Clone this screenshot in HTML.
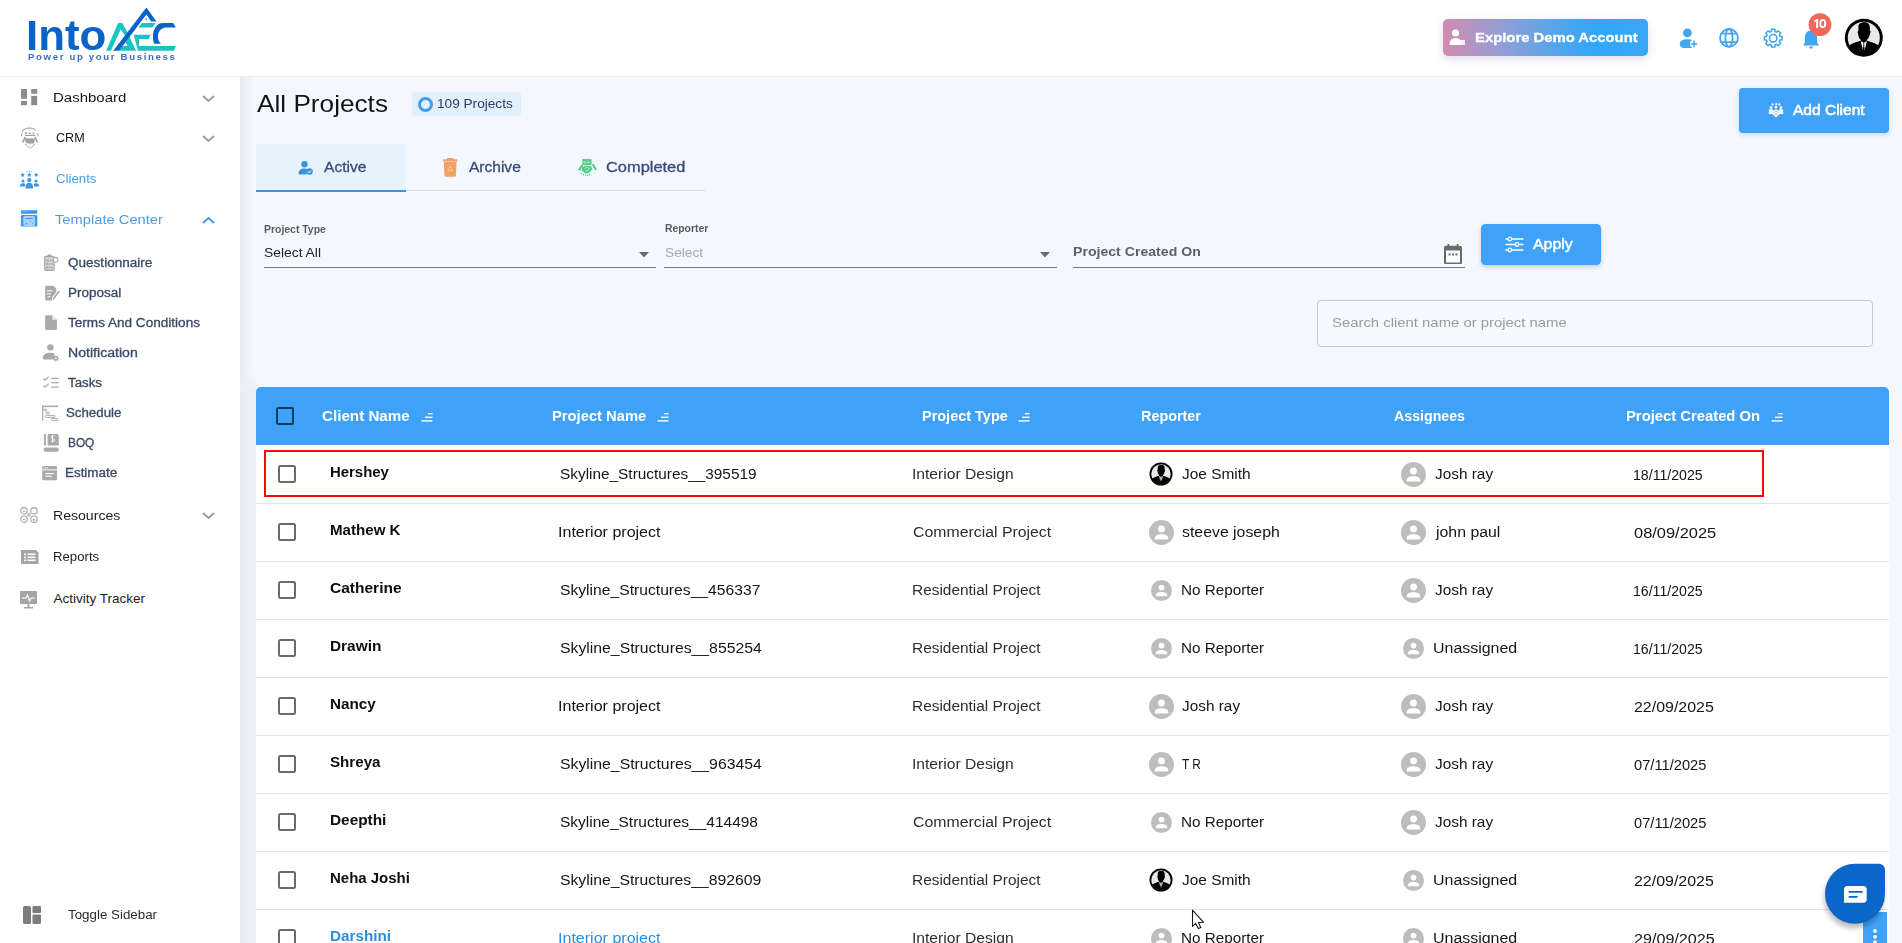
<!DOCTYPE html>
<html><head><meta charset="utf-8">
<style>
*{box-sizing:border-box;margin:0;padding:0}
html,body{width:1902px;height:943px;overflow:hidden;background:#f4f8fe;font-family:"Liberation Sans",sans-serif;color:#111;position:relative}
.abs{position:absolute}
.t{position:absolute;white-space:nowrap;line-height:1;transform-origin:0 0;display:inline-block}
</style></head><body>

<div class="abs" style="left:0;top:0;width:1902px;height:77px;background:#fff;border-bottom:1px solid #e8ebef"></div>
<div class="abs" style="left:0;top:77px;width:240px;height:866px;background:#fff"></div>
<div class="abs" style="left:240px;top:77px;width:14px;height:866px;background:linear-gradient(to right,#e6ebf2,#f4f8fe)"></div>
<div class="abs" style="left:240px;top:392px;width:16px;height:551px;background:linear-gradient(to right,#e6ebf1,#eaeff5 60%,#ebf0f7)"></div>
<div class="abs" style="left:240px;top:372px;width:16px;height:20px;background:linear-gradient(to bottom,rgba(234,239,245,0),#eaeff5)"></div>
<svg class="abs" style="left:104px;top:4px" width="74.2" height="50" viewBox="0 0 1400 943">
<path d="M40,880 L265,360 L345,360 L480,600 L400,600 L315,480 L130,880 Z" fill="#1cc3c4"/>
<path fill-rule="evenodd" d="M285,880 L605,880 L482,620 Z M355,790 L445,790 L405,715 Z" fill="#1cc3c4"/>
<path d="M650,445 L915,445 L975,360 L715,360 Z" fill="#1cc3c4"/>
<path d="M560,580 L880,580 L845,660 L660,660 L660,790 L1357,790 L1320,880 L640,880 Z" fill="#1cc3c4"/>
<path d="M175,880 L800,65 L990,330 L890,330 L800,200 L285,880 Z" fill="#0b63c8"/>
<rect x="780" y="270" width="32" height="30" fill="#0b63c8" opacity="0.7"/>
<path d="M1110,360 L1305,360 L1357,445 L1166,445 C1070,450 1018,530 1018,617 C1018,680 1045,720 1075,750 L949,750 C935,720 924,670 924,617 C924,470 1000,360 1110,360 Z" fill="#0b63c8"/>
</svg>
<div class="abs" style="left:1443px;top:19px;width:205px;height:37px;border-radius:5px;background:linear-gradient(to right,#d48bb0 0%,#8f9fd6 30%,#4aa6ef 60%,#2fa7f8 75%,#3aa7f5 100%);box-shadow:0 3px 8px rgba(120,120,200,0.25)"></div>
<svg class="abs" style="left:1449px;top:29px" width="18" height="18" viewBox="0 0 18 18"><circle cx="6.5" cy="4" r="3.6" fill="#fff"/><path d="M0.5,16 C0.5,11 3,9 6.5,9 C9,9 10.5,10 11.5,11 L11.5,16 Z" fill="#fff"/><rect x="10" y="11" width="6" height="5" fill="#fff" opacity="0.85"/></svg>
<svg class="abs" style="left:1676px;top:24px" width="160" height="28" viewBox="1676 24 160 28">
<circle cx="1687.4" cy="32.9" r="4.4" fill="#3ea6f2"/>
<path d="M1684.2,48 C1681.6,48 1679.8,46.6 1679.8,44.2 C1679.8,41 1682.3,39.2 1687.2,39.2 C1689.5,39.2 1691.2,39.6 1692.4,40.2 L1692.4,48 Z" fill="#3ea6f2"/>
<circle cx="1694" cy="43.9" r="4.2" fill="#fff"/>
<path d="M1690.6,43.9 H1697.4 M1694,40.5 V47.3" stroke="#3ea6f2" stroke-width="1.5"/>
<g fill="none" stroke="#3ea6f2" stroke-width="1.8"><circle cx="1729" cy="37.9" r="8.9"/><ellipse cx="1729" cy="37.9" rx="3.6" ry="8.9"/><path d="M1721.2,33.7 H1736.8 M1721.2,42.1 H1736.8"/></g>
<path d="M1779.96,36.39 L1782.03,36.48 L1782.03,39.92 L1779.96,40.01 L1779.26,41.70 L1780.66,43.23 L1778.23,45.66 L1776.70,44.26 L1775.01,44.96 L1774.92,47.03 L1771.48,47.03 L1771.39,44.96 L1769.70,44.26 L1768.17,45.66 L1765.74,43.23 L1767.14,41.70 L1766.44,40.01 L1764.37,39.92 L1764.37,36.48 L1766.44,36.39 L1767.14,34.70 L1765.74,33.17 L1768.17,30.74 L1769.70,32.14 L1771.39,31.44 L1771.48,29.37 L1774.92,29.37 L1775.01,31.44 L1776.70,32.14 L1778.23,30.74 L1780.66,33.17 L1779.26,34.70 Z" fill="none" stroke="#3ea6f2" stroke-width="1.5" stroke-linejoin="round"/><circle cx="1773.2" cy="38.2" r="3.7" fill="none" stroke="#3ea6f2" stroke-width="1.6"/>
</svg>
<svg class="abs" style="left:1802px;top:29px" width="18" height="21" viewBox="0 0 18 21">
<path d="M9,1.5 C5,1.5 3,4.5 3,8.5 L3,13.5 L1,16.5 L17,16.5 L15,13.5 L15,8.5 C15,4.5 13,1.5 9,1.5 Z" fill="#3ea6f2"/>
<path d="M7,17.5 H11 L10.3,19.5 H7.7 Z" fill="#3ea6f2"/>
</svg>
<svg class="abs" style="left:1800px;top:8px" width="40" height="32" viewBox="1800 8 40 32"><circle cx="1820" cy="24.6" r="11.4" fill="#f2675a"/><path d="M1814.1,20.6 L1816.5,19 H1818.2 V28.1 H1816.1 V21.5 L1814.7,22.4 Z" fill="#fff"/><ellipse cx="1822.8" cy="23.55" rx="2.45" ry="3.65" fill="none" stroke="#fff" stroke-width="1.9"/></svg>
<svg class="abs" style="left:1844.2px;top:17.7px" width="39.6" height="39.6" viewBox="0 0 40 40"><circle cx="20" cy="20" r="19.2" fill="#000"/><circle cx="20" cy="20" r="16.2" fill="#e9e9e9"/>
<path d="M14.6,8.5 C14.8,5.6 17.3,4.4 20.6,4.4 C24,4.4 26.1,6.2 26.1,9.5 L26.1,13 C27.1,13.2 27.3,14.8 26.3,15.6 C25.8,18.5 24.5,21 22.9,22.3 L23.3,23 C27.5,24.3 31.8,25.3 35.2,28 A17.2,17.2 0 0 1 4.8,28 C8.2,25.3 12.5,24.3 16.7,23 L17.1,22.3 C15.5,21 14.5,18.5 14.2,15.6 C13.5,14.8 13.6,13.4 14.6,13 Z" fill="#000"/>
<path d="M16.8,23.2 L19.4,33.3 L20,27 L20.6,33.3 L23.2,23.2 L21.6,24.3 L20,25 L18.4,24.3 Z" fill="#fff"/>
<path d="M19.4,25.1 L20.6,25.1 L20.3,26.8 L20.8,31.8 L20,33.6 L19.2,31.8 L19.7,26.8 Z" fill="#000"/></svg>
<svg class="abs" style="left:21px;top:88.5px" width="17" height="17" viewBox="0 0 17 17" fill="#8c8c8c">
<rect x="0" y="0" width="6" height="9.8"/><rect x="0" y="11.9" width="6" height="4.3"/><rect x="10.2" y="0" width="6" height="4.8"/><rect x="10.2" y="6.9" width="6" height="9.3"/></svg>
<svg class="abs" style="left:201.5px;top:94.5px" width="13" height="7" viewBox="0 0 13 7"><path d="M1,1 L6.5,6 L12,1" fill="none" stroke="#9a9a9a" stroke-width="1.8"/></svg>
<svg class="abs" style="left:16px;top:124px" width="28" height="28" viewBox="0 0 28 28" fill="none" stroke="#a3a3a3">
<path d="M6,7.3 C8,4.8 11,4 13.7,4 C16.5,4 18.5,4.8 19.6,6.4" stroke-width="1.1"/><path d="M5.8,9 L5.3,12.5 M21.6,9 L22.2,12.5" stroke-width="0.9"/>
<g fill="#a3a3a3" stroke="none"><circle cx="10.1" cy="9.2" r="1"/><circle cx="13.7" cy="9.2" r="1"/><circle cx="17.5" cy="9.2" r="1"/>
<rect x="8.9" y="10.8" width="10.1" height="1.2"/><path d="M9,14.5 C10.5,14 12.5,14.2 14,14.6 C15.8,14 17.5,14.2 19,15 L18.2,19.6 L14,19.8 L9.8,19 Z"/></g>
<path d="M9.5,13 L6.5,18.5 M18.8,13 L21.5,18.5" stroke-width="1.7"/>
<path d="M9.3,20 C11,22.5 12.5,23.5 14,24 C15.5,23.5 17,22.5 18.5,20" stroke-width="1.1" stroke-dasharray="1.3,0.9"/>
</svg>
<svg class="abs" style="left:201.5px;top:134.5px" width="13" height="7" viewBox="0 0 13 7"><path d="M1,1 L6.5,6 L12,1" fill="none" stroke="#9a9a9a" stroke-width="1.8"/></svg>
<svg class="abs" style="left:16px;top:164px" width="28" height="66" viewBox="0 0 28 66" fill="#3d96e6"><polygon points="6.60,8.40 7.26,9.99 8.98,10.13 7.67,11.25 8.07,12.92 6.60,12.03 5.13,12.92 5.53,11.25 4.22,10.13 5.94,9.99"/><polygon points="13.30,8.40 13.96,9.99 15.68,10.13 14.37,11.25 14.77,12.92 13.30,12.03 11.83,12.92 12.23,11.25 10.92,10.13 12.64,9.99"/><polygon points="20.30,8.40 20.96,9.99 22.68,10.13 21.37,11.25 21.77,12.92 20.30,12.03 18.83,12.92 19.23,11.25 17.92,10.13 19.64,9.99"/>
<path d="M13.3,6.2 V7.8 M10.5,7 L11.4,8.2 M16.1,7 L15.2,8.2" stroke="#3d96e6" stroke-width="0.7"/>
<circle cx="13.3" cy="16.1" r="2.1"/><circle cx="7" cy="17.1" r="1.5"/><circle cx="20" cy="17.1" r="1.5"/>
<path d="M9.4,24.5 C9.4,20.5 11,18.8 13.3,18.8 C15.6,18.8 17.2,20.5 17.2,24.5 Z"/>
<path d="M3.8,22.4 C3.8,20.2 5,19.2 7,19.2 C8.3,19.2 9,19.7 9.3,20.3 L8.8,22.4 Z"/><path d="M23.2,22.4 C23.2,20.2 22,19.2 20,19.2 C18.7,19.2 18,19.7 17.7,20.3 L18.2,22.4 Z"/>
<rect x="4.9" y="46.2" width="16.4" height="3.5" rx="1"/><rect x="4.9" y="51.1" width="16.4" height="11.5" rx="1.2"/>
<rect x="7.3" y="52.1" width="11.6" height="9.8" rx="1.5" fill="#a6d2fb"/>
<g fill="#3d96e6"><rect x="9.1" y="54" width="7.8" height="1"/><rect x="9.1" y="59.3" width="2.8" height="1"/><rect x="13.6" y="57.2" width="1.1" height="0.9"/><rect x="16.3" y="59.2" width="0.9" height="0.9"/></g>
<rect x="6.5" y="47.5" width="5" height="0.5" fill="#fff" opacity="0.5"/>
</svg>
<svg class="abs" style="left:201.5px;top:216.5px" width="13" height="7" viewBox="0 0 13 7"><path d="M1,6 L6.5,1 L12,6" fill="none" stroke="#3d96e6" stroke-width="1.8"/></svg>
<svg class="abs" style="left:40px;top:250px" width="22" height="116" viewBox="40 250 22 116">
<rect x="44.6" y="256.4" width="9.6" height="14" rx="1" fill="#d2d2d2" stroke="#a9a9a9" stroke-width="1.1"/><rect x="47.5" y="254.6" width="3.8" height="2.6" rx="0.8" fill="#a9a9a9"/>
<circle cx="55.6" cy="259.8" r="2.4" fill="#fff" stroke="#a9a9a9" stroke-width="1.1"/>
<g fill="#a9a9a9"><rect x="46.2" y="259.5" width="2.2" height="2"/><rect x="46.2" y="263" width="2.2" height="2"/><rect x="46.2" y="266.5" width="2.2" height="2"/><rect x="49.3" y="260" width="3.5" height="1"/><rect x="49.3" y="263.5" width="3.5" height="1"/><rect x="49.3" y="267" width="3.5" height="1"/></g>
<path d="M45.2,286.8 a1.1,1.1 0 0 1 1.1,-1.1 H53.5 L56.3,288.5 V292 L52,297.5 V300.4 H46.3 a1.1,1.1 0 0 1 -1.1,-1.1 Z" fill="#a9a9a9"/>
<path d="M52.8,298.2 L58.6,290.4 L60,291.5 L54.2,299.3 L52.5,300 Z" fill="#a9a9a9"/>
<g fill="#fff"><rect x="46.8" y="290.3" width="5.5" height="1"/><rect x="46.8" y="293.4" width="4.2" height="1"/><rect x="47.6" y="296.2" width="3.2" height="1"/></g>
<path d="M45.2,316.4 a1.2,1.2 0 0 1 1.2,-1.2 H52.3 L56.9,319.8 V328.8 a1.2,1.2 0 0 1 -1.2,1.2 H46.4 a1.2,1.2 0 0 1 -1.2,-1.2 Z" fill="#a9a9a9"/><path d="M52.3,315.2 V319.8 H56.9 Z" fill="#ececec"/>
<circle cx="50.4" cy="347.4" r="3.2" fill="#a9a9a9"/><path d="M42.8,358 C42.8,354.6 46,352.8 50.4,352.8 C52.2,352.8 53.6,353.1 54.6,353.5 L53.8,359.6 H44.4 a1.6,1.6 0 0 1 -1.6,-1.6 Z" fill="#a9a9a9"/>
<circle cx="55.8" cy="358.3" r="2.4" fill="#a9a9a9"/><circle cx="55.8" cy="358.3" r="0.9" fill="#fff"/>
<path d="M55.8,355.2 V361.4 M52.7,358.3 H58.9 M53.6,356.1 L58,360.5 M58,356.1 L53.6,360.5" stroke="#a9a9a9" stroke-width="0.9"/><circle cx="55.8" cy="358.3" r="0.9" fill="#fff"/>
</svg>
<svg class="abs" style="left:40px;top:370px" width="22" height="116" viewBox="40 370 22 116">
<path d="M43.4,378.6 L45,380.2 L48.6,376.8 M43.4,385.6 L45,387.2 L48.6,383.8" fill="none" stroke="#a9a9a9" stroke-width="1.3"/>
<path d="M51.4,378.4 H58.8 M51.4,382.7 H58.8 M51.4,387.1 H58.8" fill="none" stroke="#a9a9a9" stroke-width="1.3"/>
<rect x="42" y="405.7" width="1.3" height="14.8" fill="#a9a9a9"/><rect x="42" y="405.6" width="16.2" height="1.5" fill="#a9a9a9"/>
<g fill="none" stroke="#a9a9a9" stroke-width="1"><rect x="43.8" y="409.1" width="2.8" height="1.6" rx="0.6"/><rect x="46" y="411.9" width="3.5" height="1.9" rx="0.7"/><rect x="45.4" y="415.4" width="9.6" height="2" rx="0.8"/><rect x="51.6" y="418.5" width="6.2" height="2.2" rx="0.8"/></g>
<rect x="44" y="434" width="1.9" height="11.6" rx="0.6" fill="#a9a9a9"/><path d="M47.6,434 H56.8 a2,2 0 0 1 2,2 V445.6 H47.6 Z" fill="#a9a9a9"/><rect x="43.6" y="447.4" width="15.2" height="4.4" rx="2" fill="#a9a9a9"/>
<path d="M54.6,436.3 C53.8,435.6 51.6,435.6 51.4,437 C51.2,438.5 54.7,438.4 54.6,440.2 C54.5,441.6 52.3,441.9 51.4,441 M52.5,435.5 V442.5" fill="none" stroke="#fff" stroke-width="0.9"/>
<rect x="42.2" y="466" width="14.8" height="14.2" rx="1.2" fill="#a9a9a9"/><g fill="#fff"><rect x="42.2" y="469.4" width="14.8" height="0.9"/><circle cx="44" cy="467.8" r="0.6"/><circle cx="45.8" cy="467.8" r="0.6"/><circle cx="47.6" cy="467.8" r="0.6"/>
<rect x="45.2" y="473" width="8.6" height="1.1"/><rect x="45.2" y="475.6" width="6.8" height="1.1"/></g>
</svg>
<svg class="abs" style="left:20px;top:507px" width="18" height="16" viewBox="0 0 18 16" fill="none" stroke="#a5a5a5" stroke-width="1.1">
<circle cx="4" cy="3.8" r="3.2"/><circle cx="14" cy="3.8" r="3.2"/><circle cx="4" cy="12.2" r="3.2"/><circle cx="14" cy="12.2" r="3.2"/><circle cx="9" cy="8" r="1.2"/>
<path d="M2.7,4.2 L5.3,4.2 M3,12.6 L5,12.6 M13,12.2 L14,13.5 L15,12.2"/></svg>
<svg class="abs" style="left:201.5px;top:512px" width="13" height="7" viewBox="0 0 13 7"><path d="M1,1 L6.5,6 L12,1" fill="none" stroke="#9a9a9a" stroke-width="1.8"/></svg>
<svg class="abs" style="left:20.5px;top:550px" width="18" height="14" viewBox="0 0 18 14" fill="#a5a5a5">
<path d="M0,0 H15 L17.5,2.5 V14 H0 Z"/><g fill="#fff"><rect x="3" y="3.5" width="2" height="1.6"/><rect x="3" y="6.5" width="2" height="1.6"/><rect x="3" y="9.5" width="2" height="1.6"/>
<rect x="6.5" y="3.5" width="8" height="1.6"/><rect x="6.5" y="6.5" width="8" height="1.6"/><rect x="6.5" y="9.5" width="8" height="1.6"/></g></svg>
<svg class="abs" style="left:20px;top:590.5px" width="18" height="18" viewBox="0 0 18 18" fill="#a5a5a5">
<rect x="0" y="0" width="17" height="13" rx="1"/><rect x="7.5" y="13" width="2" height="3"/><rect x="4" y="16" width="9" height="1.5"/>
<path d="M2,7 H6 L7.5,4 L9.5,10 L11,7 H15" fill="none" stroke="#fff" stroke-width="1.1"/></svg>
<svg class="abs" style="left:23px;top:906px" width="18" height="18" viewBox="0 0 18 18" fill="#7d7d7d">
<rect x="0" y="0" width="8" height="18" rx="1.5"/><rect x="9.5" y="0" width="8.5" height="7" rx="1.2"/><rect x="9.5" y="8.5" width="8.5" height="9.5" rx="1.2"/></svg>
<div class="abs" style="left:412px;top:92px;width:109px;height:24px;border-radius:3px;background:#e2f0fd"></div>
<div class="abs" style="left:417.5px;top:96.5px;width:15px;height:15px;border-radius:50%;border:3.4px solid #3d9cf0"></div>
<div class="abs" style="left:1739px;top:88px;width:150px;height:45px;border-radius:4px;background:#3fa2f7;box-shadow:0 2px 5px rgba(60,140,220,0.25)"></div>
<svg class="abs" style="left:1768px;top:102px" width="17" height="16" viewBox="0 0 17 16" fill="#fff">
<circle cx="4.6" cy="2.4" r="1.1"/><circle cx="8.3" cy="2.1" r="1.1"/><circle cx="11.4" cy="2.4" r="1.1"/>
<circle cx="3" cy="5.6" r="1.3"/><circle cx="8" cy="5.2" r="1.4"/><circle cx="13" cy="5.6" r="1.3"/>
<path d="M0.8,12 V8.5 a1.5,1.5 0 0 1 1.5,-1.5 H4.5 V12 Z"/><path d="M15.2,12 V8.5 a1.5,1.5 0 0 0 -1.5,-1.5 H11.5 V12 Z"/>
<path d="M4,9 L8,7.3 L12,9 L12,11.8 L8,15.6 L4,11.8 Z"/>
<path d="M5.5,10.5 L8,9 L10.5,10.5 M6.5,12.5 L8,11.5 L9.5,12.5" stroke="#3fa2f7" stroke-width="0.6" fill="none"/></svg>
<div class="abs" style="left:256px;top:144px;width:150px;height:46px;background:#e6f3fd"></div>
<div class="abs" style="left:256px;top:190px;width:450px;height:1px;background:#dde2e8"></div>
<div class="abs" style="left:256px;top:189.5px;width:150px;height:2.2px;background:#3a93e0"></div>
<svg class="abs" style="left:297.5px;top:161px" width="15" height="14" viewBox="0 0 15 14" fill="#3a93e0">
<circle cx="6.5" cy="3.3" r="3.2"/><path d="M0.5,12.5 C0.5,9 3,7.5 6.5,7.5 C7.5,7.5 8.5,7.7 9,8 L8.5,13.5 L1.5,13.5 a1,1 0 0 1 -1,-1 Z"/>
<circle cx="11.5" cy="10.5" r="3.3"/><path d="M9.8,10.5 L11,11.8 L13.2,9.3" fill="none" stroke="#fff" stroke-width="1"/></svg>
<svg class="abs" style="left:442.8px;top:158px" width="15" height="19" viewBox="0 0 15 19" fill="#f3a062"><rect x="3.8" y="0" width="6.8" height="2" rx="0.5"/><rect x="0" y="1.3" width="14.4" height="2.1" rx="0.6"/><path d="M0.8,3.8 H13.6 L12.9,17.4 a1.4,1.4 0 0 1 -1.4,1.3 H2.9 a1.4,1.4 0 0 1 -1.4,-1.3 Z"/><path d="M7.2,8.3 L9.6,12.6 H4.8 Z" fill="none" stroke="#fbd6b8" stroke-width="0.9" stroke-dasharray="2,0.8"/></svg>
<svg class="abs" style="left:574px;top:154px" width="26" height="26" viewBox="0 0 26 26" fill="#55cf8f">
<rect x="8.3" y="5" width="9.3" height="6.2" rx="0.6"/><g fill="#a8f0c8"><rect x="9.5" y="7.6" width="2.2" height="1.6"/><rect x="12.8" y="7.8" width="2.5" height="1.2"/></g>
<path d="M5.2,15.6 L7.9,11.8 M19.2,11 L21.6,15" stroke="#55cf8f" stroke-width="2.3" stroke-linecap="round"/>
<path d="M8.2,13 L12,11.8 L17.2,12.3 L18.6,15.5 L14.3,19.6 L11,19.3 L7.6,16.4 Z"/>
<path d="M10.5,14.5 L13,13.3 L16,14.8 M12,17 L15,15.6" stroke="#a8f0c8" stroke-width="0.8" fill="none"/>
<g><circle cx="7.3" cy="19.6" r="0.75"/><circle cx="9.4" cy="20.5" r="0.75"/><circle cx="11.5" cy="21.2" r="0.75"/><circle cx="13.6" cy="21.4" r="0.75"/><circle cx="15.4" cy="20.4" r="0.75"/></g>
</svg>
<div class="abs" style="left:264px;top:266.5px;width:392px;height:1px;background:#7c7c7c"></div>
<svg class="abs" style="left:639px;top:251.5px" width="10" height="6" viewBox="0 0 10 6"><path d="M0,0 H10 L5,5.5 Z" fill="#6b6b6b"/></svg>
<div class="abs" style="left:664px;top:266.5px;width:393px;height:1px;background:#7c7c7c"></div>
<svg class="abs" style="left:1039.5px;top:251.5px" width="10" height="6" viewBox="0 0 10 6"><path d="M0,0 H10 L5,5.5 Z" fill="#6b6b6b"/></svg>
<div class="abs" style="left:1073px;top:266.5px;width:392px;height:1px;background:#7c7c7c"></div>
<svg class="abs" style="left:1444px;top:243.5px" width="18" height="20.5" viewBox="0 0 18 20.5" fill="#6a6a6a">
<rect x="3.5" y="0" width="1.8" height="3"/><rect x="12.7" y="0" width="1.8" height="3"/>
<path d="M0,3.5 a1.8,1.8 0 0 1 1.8,-1.8 H16.2 a1.8,1.8 0 0 1 1.8,1.8 V18.7 a1.8,1.8 0 0 1 -1.8,1.8 H1.8 a1.8,1.8 0 0 1 -1.8,-1.8 Z"/>
<rect x="2" y="6.5" width="14" height="12" fill="#fff"/><rect x="4.5" y="9.5" width="2" height="2"/><rect x="8" y="9.5" width="2" height="2"/><rect x="11.5" y="9.5" width="2" height="2"/></svg>
<div class="abs" style="left:1481px;top:224px;width:120px;height:40.5px;border-radius:4.5px;background:#3fa1f7;box-shadow:0 2px 4px rgba(40,90,150,0.25)"></div>
<svg class="abs" style="left:1504.5px;top:235.5px" width="19" height="17" viewBox="0 0 19 17" fill="none" stroke="#fff" stroke-width="1.3">
<path d="M0.5,3 H3 M6.5,3 H18.5 M0.5,8.5 H10 M14,8.5 H18.5 M0.5,14 H3 M6.5,14 H18.5"/><circle cx="4.8" cy="3" r="1.8"/><circle cx="12" cy="8.5" r="1.8"/><circle cx="4.8" cy="14" r="1.8"/></svg>
<div class="abs" style="left:1317px;top:300px;width:556px;height:47px;border-radius:4px;border:1px solid #c5c8cc;background:#f6f9fd"></div>
<div class="abs" style="left:256px;top:387px;width:1633px;height:58px;border-radius:5px 5px 0 0;background:#3fa2f7"></div>
<div class="abs" style="left:256px;top:445px;width:1633px;height:498px;background:#fff"></div>
<div class="abs" style="left:276px;top:407px;width:18px;height:18px;border:2px solid #0c3a63;border-radius:2.5px"></div>
<svg class="abs" style="left:420.5px;top:413px" width="12" height="9" viewBox="0 0 12 9" fill="#fff"><rect x="7" y="0" width="4.5" height="1.4"/><rect x="4" y="3.6" width="7.5" height="1.4"/><rect x="0.5" y="7.2" width="11" height="1.4"/></svg>
<svg class="abs" style="left:656.5px;top:413px" width="12" height="9" viewBox="0 0 12 9" fill="#fff"><rect x="7" y="0" width="4.5" height="1.4"/><rect x="4" y="3.6" width="7.5" height="1.4"/><rect x="0.5" y="7.2" width="11" height="1.4"/></svg>
<svg class="abs" style="left:1017.5px;top:413px" width="12" height="9" viewBox="0 0 12 9" fill="#fff"><rect x="7" y="0" width="4.5" height="1.4"/><rect x="4" y="3.6" width="7.5" height="1.4"/><rect x="0.5" y="7.2" width="11" height="1.4"/></svg>
<svg class="abs" style="left:1770.5px;top:413px" width="12" height="9" viewBox="0 0 12 9" fill="#fff"><rect x="7" y="0" width="4.5" height="1.4"/><rect x="4" y="3.6" width="7.5" height="1.4"/><rect x="0.5" y="7.2" width="11" height="1.4"/></svg>
<div class="abs" style="left:256px;top:503px;width:1633px;height:1px;background:#e3e3e3"></div>
<div class="abs" style="left:278px;top:465px;width:18px;height:18px;border:2px solid #6a6a6a;border-radius:2.5px"></div>
<svg class="abs" style="left:1149.4px;top:462.2px" width="24" height="24" viewBox="0 0 40 40"><circle cx="20" cy="20" r="19.2" fill="#000"/><circle cx="20" cy="20" r="16.2" fill="#e9e9e9"/>
<path d="M14.6,8.5 C14.8,5.6 17.3,4.4 20.6,4.4 C24,4.4 26.1,6.2 26.1,9.5 L26.1,13 C27.1,13.2 27.3,14.8 26.3,15.6 C25.8,18.5 24.5,21 22.9,22.3 L23.3,23 C27.5,24.3 31.8,25.3 35.2,28 A17.2,17.2 0 0 1 4.8,28 C8.2,25.3 12.5,24.3 16.7,23 L17.1,22.3 C15.5,21 14.5,18.5 14.2,15.6 C13.5,14.8 13.6,13.4 14.6,13 Z" fill="#000"/>
<path d="M16.8,23.2 L19.4,33.3 L20,27 L20.6,33.3 L23.2,23.2 L21.6,24.3 L20,25 L18.4,24.3 Z" fill="#fff"/>
<path d="M19.4,25.1 L20.6,25.1 L20.3,26.8 L20.8,31.8 L20,33.6 L19.2,31.8 L19.7,26.8 Z" fill="#000"/></svg>
<svg class="abs" style="left:1401.0px;top:461.8px" width="25" height="25" viewBox="0 0 24 24">
<circle cx="12" cy="12" r="12" fill="#bdbdbd"/><circle cx="12" cy="8.6" r="3.3" fill="#fff"/><path d="M5.5,17.2 C5.5,14.8 8.5,13.6 12,13.6 C15.5,13.6 18.5,14.8 18.5,17.2 V18.6 H5.5 Z" fill="#fff"/></svg>
<div class="abs" style="left:256px;top:561px;width:1633px;height:1px;background:#e3e3e3"></div>
<div class="abs" style="left:278px;top:523px;width:18px;height:18px;border:2px solid #6a6a6a;border-radius:2.5px"></div>
<svg class="abs" style="left:1148.9px;top:519.7px" width="25" height="25" viewBox="0 0 24 24">
<circle cx="12" cy="12" r="12" fill="#bdbdbd"/><circle cx="12" cy="8.6" r="3.3" fill="#fff"/><path d="M5.5,17.2 C5.5,14.8 8.5,13.6 12,13.6 C15.5,13.6 18.5,14.8 18.5,17.2 V18.6 H5.5 Z" fill="#fff"/></svg>
<svg class="abs" style="left:1401.0px;top:519.8px" width="25" height="25" viewBox="0 0 24 24">
<circle cx="12" cy="12" r="12" fill="#bdbdbd"/><circle cx="12" cy="8.6" r="3.3" fill="#fff"/><path d="M5.5,17.2 C5.5,14.8 8.5,13.6 12,13.6 C15.5,13.6 18.5,14.8 18.5,17.2 V18.6 H5.5 Z" fill="#fff"/></svg>
<div class="abs" style="left:256px;top:619px;width:1633px;height:1px;background:#e3e3e3"></div>
<div class="abs" style="left:278px;top:581px;width:18px;height:18px;border:2px solid #6a6a6a;border-radius:2.5px"></div>
<svg class="abs" style="left:1150.9px;top:579.7px" width="21" height="21" viewBox="0 0 24 24">
<circle cx="12" cy="12" r="12" fill="#bdbdbd"/><circle cx="12" cy="8.6" r="3.3" fill="#fff"/><path d="M5.5,17.2 C5.5,14.8 8.5,13.6 12,13.6 C15.5,13.6 18.5,14.8 18.5,17.2 V18.6 H5.5 Z" fill="#fff"/></svg>
<svg class="abs" style="left:1401.0px;top:577.8px" width="25" height="25" viewBox="0 0 24 24">
<circle cx="12" cy="12" r="12" fill="#bdbdbd"/><circle cx="12" cy="8.6" r="3.3" fill="#fff"/><path d="M5.5,17.2 C5.5,14.8 8.5,13.6 12,13.6 C15.5,13.6 18.5,14.8 18.5,17.2 V18.6 H5.5 Z" fill="#fff"/></svg>
<div class="abs" style="left:256px;top:677px;width:1633px;height:1px;background:#e3e3e3"></div>
<div class="abs" style="left:278px;top:639px;width:18px;height:18px;border:2px solid #6a6a6a;border-radius:2.5px"></div>
<svg class="abs" style="left:1150.9px;top:637.7px" width="21" height="21" viewBox="0 0 24 24">
<circle cx="12" cy="12" r="12" fill="#bdbdbd"/><circle cx="12" cy="8.6" r="3.3" fill="#fff"/><path d="M5.5,17.2 C5.5,14.8 8.5,13.6 12,13.6 C15.5,13.6 18.5,14.8 18.5,17.2 V18.6 H5.5 Z" fill="#fff"/></svg>
<svg class="abs" style="left:1403.0px;top:637.8px" width="21" height="21" viewBox="0 0 24 24">
<circle cx="12" cy="12" r="12" fill="#bdbdbd"/><circle cx="12" cy="8.6" r="3.3" fill="#fff"/><path d="M5.5,17.2 C5.5,14.8 8.5,13.6 12,13.6 C15.5,13.6 18.5,14.8 18.5,17.2 V18.6 H5.5 Z" fill="#fff"/></svg>
<div class="abs" style="left:256px;top:735px;width:1633px;height:1px;background:#e3e3e3"></div>
<div class="abs" style="left:278px;top:697px;width:18px;height:18px;border:2px solid #6a6a6a;border-radius:2.5px"></div>
<svg class="abs" style="left:1148.9px;top:693.7px" width="25" height="25" viewBox="0 0 24 24">
<circle cx="12" cy="12" r="12" fill="#bdbdbd"/><circle cx="12" cy="8.6" r="3.3" fill="#fff"/><path d="M5.5,17.2 C5.5,14.8 8.5,13.6 12,13.6 C15.5,13.6 18.5,14.8 18.5,17.2 V18.6 H5.5 Z" fill="#fff"/></svg>
<svg class="abs" style="left:1401.0px;top:693.8px" width="25" height="25" viewBox="0 0 24 24">
<circle cx="12" cy="12" r="12" fill="#bdbdbd"/><circle cx="12" cy="8.6" r="3.3" fill="#fff"/><path d="M5.5,17.2 C5.5,14.8 8.5,13.6 12,13.6 C15.5,13.6 18.5,14.8 18.5,17.2 V18.6 H5.5 Z" fill="#fff"/></svg>
<div class="abs" style="left:256px;top:793px;width:1633px;height:1px;background:#e3e3e3"></div>
<div class="abs" style="left:278px;top:755px;width:18px;height:18px;border:2px solid #6a6a6a;border-radius:2.5px"></div>
<svg class="abs" style="left:1148.9px;top:751.7px" width="25" height="25" viewBox="0 0 24 24">
<circle cx="12" cy="12" r="12" fill="#bdbdbd"/><circle cx="12" cy="8.6" r="3.3" fill="#fff"/><path d="M5.5,17.2 C5.5,14.8 8.5,13.6 12,13.6 C15.5,13.6 18.5,14.8 18.5,17.2 V18.6 H5.5 Z" fill="#fff"/></svg>
<svg class="abs" style="left:1401.0px;top:751.8px" width="25" height="25" viewBox="0 0 24 24">
<circle cx="12" cy="12" r="12" fill="#bdbdbd"/><circle cx="12" cy="8.6" r="3.3" fill="#fff"/><path d="M5.5,17.2 C5.5,14.8 8.5,13.6 12,13.6 C15.5,13.6 18.5,14.8 18.5,17.2 V18.6 H5.5 Z" fill="#fff"/></svg>
<div class="abs" style="left:256px;top:851px;width:1633px;height:1px;background:#e3e3e3"></div>
<div class="abs" style="left:278px;top:813px;width:18px;height:18px;border:2px solid #6a6a6a;border-radius:2.5px"></div>
<svg class="abs" style="left:1150.9px;top:811.7px" width="21" height="21" viewBox="0 0 24 24">
<circle cx="12" cy="12" r="12" fill="#bdbdbd"/><circle cx="12" cy="8.6" r="3.3" fill="#fff"/><path d="M5.5,17.2 C5.5,14.8 8.5,13.6 12,13.6 C15.5,13.6 18.5,14.8 18.5,17.2 V18.6 H5.5 Z" fill="#fff"/></svg>
<svg class="abs" style="left:1401.0px;top:809.8px" width="25" height="25" viewBox="0 0 24 24">
<circle cx="12" cy="12" r="12" fill="#bdbdbd"/><circle cx="12" cy="8.6" r="3.3" fill="#fff"/><path d="M5.5,17.2 C5.5,14.8 8.5,13.6 12,13.6 C15.5,13.6 18.5,14.8 18.5,17.2 V18.6 H5.5 Z" fill="#fff"/></svg>
<div class="abs" style="left:256px;top:909px;width:1633px;height:1px;background:#e3e3e3"></div>
<div class="abs" style="left:278px;top:871px;width:18px;height:18px;border:2px solid #6a6a6a;border-radius:2.5px"></div>
<svg class="abs" style="left:1149.4px;top:868.2px" width="24" height="24" viewBox="0 0 40 40"><circle cx="20" cy="20" r="19.2" fill="#000"/><circle cx="20" cy="20" r="16.2" fill="#e9e9e9"/>
<path d="M14.6,8.5 C14.8,5.6 17.3,4.4 20.6,4.4 C24,4.4 26.1,6.2 26.1,9.5 L26.1,13 C27.1,13.2 27.3,14.8 26.3,15.6 C25.8,18.5 24.5,21 22.9,22.3 L23.3,23 C27.5,24.3 31.8,25.3 35.2,28 A17.2,17.2 0 0 1 4.8,28 C8.2,25.3 12.5,24.3 16.7,23 L17.1,22.3 C15.5,21 14.5,18.5 14.2,15.6 C13.5,14.8 13.6,13.4 14.6,13 Z" fill="#000"/>
<path d="M16.8,23.2 L19.4,33.3 L20,27 L20.6,33.3 L23.2,23.2 L21.6,24.3 L20,25 L18.4,24.3 Z" fill="#fff"/>
<path d="M19.4,25.1 L20.6,25.1 L20.3,26.8 L20.8,31.8 L20,33.6 L19.2,31.8 L19.7,26.8 Z" fill="#000"/></svg>
<svg class="abs" style="left:1403.0px;top:869.8px" width="21" height="21" viewBox="0 0 24 24">
<circle cx="12" cy="12" r="12" fill="#bdbdbd"/><circle cx="12" cy="8.6" r="3.3" fill="#fff"/><path d="M5.5,17.2 C5.5,14.8 8.5,13.6 12,13.6 C15.5,13.6 18.5,14.8 18.5,17.2 V18.6 H5.5 Z" fill="#fff"/></svg>
<div class="abs" style="left:256px;top:967px;width:1633px;height:1px;background:#e3e3e3"></div>
<div class="abs" style="left:278px;top:929px;width:18px;height:18px;border:2px solid #6a6a6a;border-radius:2.5px"></div>
<svg class="abs" style="left:1150.9px;top:927.7px" width="21" height="21" viewBox="0 0 24 24">
<circle cx="12" cy="12" r="12" fill="#bdbdbd"/><circle cx="12" cy="8.6" r="3.3" fill="#fff"/><path d="M5.5,17.2 C5.5,14.8 8.5,13.6 12,13.6 C15.5,13.6 18.5,14.8 18.5,17.2 V18.6 H5.5 Z" fill="#fff"/></svg>
<svg class="abs" style="left:1403.0px;top:927.8px" width="21" height="21" viewBox="0 0 24 24">
<circle cx="12" cy="12" r="12" fill="#bdbdbd"/><circle cx="12" cy="8.6" r="3.3" fill="#fff"/><path d="M5.5,17.2 C5.5,14.8 8.5,13.6 12,13.6 C15.5,13.6 18.5,14.8 18.5,17.2 V18.6 H5.5 Z" fill="#fff"/></svg>
<span class="t" style="left:25.91px;top:15.05px;font-size:42px;font-weight:700;color:#0b63c8;transform:scaleX(1.0429);">Into</span>
<span class="t" style="left:28.00px;top:52.46px;font-size:9.5px;font-weight:700;color:#3f6fc2;transform:scaleX(1.0167);letter-spacing:1.6px">Power up your Business</span>
<span class="t" style="left:1474.50px;top:31.40px;font-size:13px;font-weight:700;color:#fff;transform:scaleX(1.1413);-webkit-text-stroke:0.3px #fff">Explore Demo Account</span>
<span class="t" style="left:53.29px;top:90.57px;font-size:13.5px;font-weight:400;color:#151515;transform:scaleX(1.1095);">Dashboard</span>
<span class="t" style="left:56.00px;top:130.87px;font-size:13.5px;font-weight:400;color:#151515;transform:scaleX(0.9345);">CRM</span>
<span class="t" style="left:55.50px;top:171.57px;font-size:13.5px;font-weight:400;color:#4b9de6;transform:scaleX(0.9804);">Clients</span>
<span class="t" style="left:55.00px;top:212.77px;font-size:13.5px;font-weight:400;color:#4b9de6;transform:scaleX(1.0899);">Template Center</span>
<span class="t" style="left:68.30px;top:256.84px;font-size:12px;font-weight:400;color:#3a4a68;transform:scaleX(1.1287);-webkit-text-stroke:0.3px #3a4a68">Questionnaire</span>
<span class="t" style="left:68.30px;top:286.84px;font-size:12px;font-weight:400;color:#3a4a68;transform:scaleX(1.1243);-webkit-text-stroke:0.3px #3a4a68">Proposal</span>
<span class="t" style="left:68.30px;top:316.84px;font-size:12px;font-weight:400;color:#3a4a68;transform:scaleX(1.1305);-webkit-text-stroke:0.3px #3a4a68">Terms And Conditions</span>
<span class="t" style="left:68.30px;top:346.84px;font-size:12px;font-weight:400;color:#3a4a68;transform:scaleX(1.1757);-webkit-text-stroke:0.3px #3a4a68">Notification</span>
<span class="t" style="left:68.30px;top:376.84px;font-size:12px;font-weight:400;color:#3a4a68;transform:scaleX(1.1084);-webkit-text-stroke:0.3px #3a4a68">Tasks</span>
<span class="t" style="left:66.30px;top:406.84px;font-size:12px;font-weight:400;color:#3a4a68;transform:scaleX(1.1059);-webkit-text-stroke:0.3px #3a4a68">Schedule</span>
<span class="t" style="left:68.30px;top:436.84px;font-size:12px;font-weight:400;color:#3a4a68;transform:scaleX(0.9872);-webkit-text-stroke:0.3px #3a4a68">BOQ</span>
<span class="t" style="left:65.40px;top:466.84px;font-size:12px;font-weight:400;color:#3a4a68;transform:scaleX(1.1168);-webkit-text-stroke:0.3px #3a4a68">Estimate</span>
<span class="t" style="left:53.26px;top:508.77px;font-size:13.5px;font-weight:400;color:#1d1d1d;transform:scaleX(1.0427);">Resources</span>
<span class="t" style="left:52.62px;top:549.57px;font-size:13.5px;font-weight:400;color:#1d1d1d;transform:scaleX(0.9759);">Reports</span>
<span class="t" style="left:53.60px;top:592.07px;font-size:13.5px;font-weight:400;color:#1d1d1d;">Activity Tracker</span>
<span class="t" style="left:68.10px;top:908.30px;font-size:13px;font-weight:400;color:#2d2d2d;transform:scaleX(1.0263);">Toggle Sidebar</span>
<span class="t" style="left:256.50px;top:91.68px;font-size:24px;font-weight:400;color:#141414;transform:scaleX(1.0913);">All Projects</span>
<span class="t" style="left:436.99px;top:96.77px;font-size:13.5px;font-weight:400;color:#2b3a5e;transform:scaleX(1.0095);">109 Projects</span>
<span class="t" style="left:1792.50px;top:102.10px;font-size:15px;font-weight:400;color:#fff;transform:scaleX(1.0351);-webkit-text-stroke:0.55px #fff">Add Client</span>
<span class="t" style="left:324.00px;top:160.35px;font-size:14px;font-weight:400;color:#3a4a7c;transform:scaleX(1.1112);-webkit-text-stroke:0.3px #3a4a7c">Active</span>
<span class="t" style="left:469.00px;top:160.35px;font-size:14px;font-weight:400;color:#3a4a7c;transform:scaleX(1.1088);-webkit-text-stroke:0.3px #3a4a7c">Archive</span>
<span class="t" style="left:605.60px;top:160.05px;font-size:14px;font-weight:400;color:#3a4a7c;transform:scaleX(1.1716);-webkit-text-stroke:0.3px #3a4a7c">Completed</span>
<span class="t" style="left:264.20px;top:223.61px;font-size:10.5px;font-weight:700;color:#5a5a5a;transform:scaleX(0.9936);">Project Type</span>
<span class="t" style="left:264.20px;top:245.97px;font-size:13.5px;font-weight:400;color:#222;transform:scaleX(1.0271);">Select All</span>
<span class="t" style="left:664.60px;top:223.31px;font-size:10.5px;font-weight:700;color:#5a5a5a;transform:scaleX(0.9892);">Reporter</span>
<span class="t" style="left:664.60px;top:246.07px;font-size:13.5px;font-weight:400;color:#a9a9a9;transform:scaleX(1.0167);">Select</span>
<span class="t" style="left:1072.60px;top:245.10px;font-size:13px;font-weight:700;color:#596169;transform:scaleX(1.0848);">Project Created On</span>
<span class="t" style="left:1533.00px;top:236.83px;font-size:14.5px;font-weight:400;color:#fff;transform:scaleX(1.0940);-webkit-text-stroke:0.45px #fff">Apply</span>
<span class="t" style="left:1331.50px;top:316.30px;font-size:13px;font-weight:400;color:#9b9b9b;transform:scaleX(1.1440);">Search client name or project name</span>
<span class="t" style="left:322.00px;top:409.25px;font-size:14px;font-weight:700;color:#fff;transform:scaleX(1.0848);">Client Name</span>
<span class="t" style="left:551.60px;top:409.25px;font-size:14px;font-weight:700;color:#fff;transform:scaleX(1.0536);">Project Name</span>
<span class="t" style="left:921.50px;top:409.25px;font-size:14px;font-weight:700;color:#fff;transform:scaleX(1.0336);">Project Type</span>
<span class="t" style="left:1140.70px;top:409.25px;font-size:14px;font-weight:700;color:#fff;transform:scaleX(1.0272);">Reporter</span>
<span class="t" style="left:1393.90px;top:409.25px;font-size:14px;font-weight:700;color:#fff;transform:scaleX(1.0136);">Assignees</span>
<span class="t" style="left:1626.20px;top:409.25px;font-size:14px;font-weight:700;color:#fff;transform:scaleX(1.0573);">Project Created On</span>
<span class="t" style="left:330.40px;top:465.25px;font-size:14px;font-weight:700;color:#0c0c0c;transform:scaleX(1.0655);">Hershey</span>
<span class="t" style="left:559.50px;top:467.15px;font-size:14px;font-weight:400;color:#141414;transform:scaleX(1.0981);">Skyline_Structures__395519</span>
<span class="t" style="left:912.08px;top:467.05px;font-size:14px;font-weight:400;color:#2e2e2e;transform:scaleX(1.1159);">Interior Design</span>
<span class="t" style="left:1182.20px;top:467.35px;font-size:14px;font-weight:400;color:#151515;transform:scaleX(1.1031);">Joe Smith</span>
<span class="t" style="left:1434.50px;top:467.05px;font-size:14px;font-weight:400;color:#151515;transform:scaleX(1.0981);">Josh ray</span>
<span class="t" style="left:1632.99px;top:467.65px;font-size:14px;font-weight:400;color:#151515;transform:scaleX(1.0096);">18/11/2025</span>
<span class="t" style="left:330.40px;top:523.25px;font-size:14px;font-weight:700;color:#0c0c0c;transform:scaleX(1.0793);">Mathew K</span>
<span class="t" style="left:558.35px;top:525.15px;font-size:14px;font-weight:400;color:#141414;transform:scaleX(1.1457);">Interior project</span>
<span class="t" style="left:913.20px;top:525.05px;font-size:14px;font-weight:400;color:#2e2e2e;transform:scaleX(1.1313);">Commercial Project</span>
<span class="t" style="left:1182.20px;top:525.35px;font-size:14px;font-weight:400;color:#151515;transform:scaleX(1.1319);">steeve joseph</span>
<span class="t" style="left:1435.63px;top:525.05px;font-size:14px;font-weight:400;color:#151515;transform:scaleX(1.1331);">john paul</span>
<span class="t" style="left:1634.00px;top:525.65px;font-size:14px;font-weight:400;color:#151515;transform:scaleX(1.1738);">08/09/2025</span>
<span class="t" style="left:330.40px;top:581.25px;font-size:14px;font-weight:700;color:#0c0c0c;transform:scaleX(1.1083);">Catherine</span>
<span class="t" style="left:559.50px;top:583.15px;font-size:14px;font-weight:400;color:#141414;transform:scaleX(1.1193);">Skyline_Structures__456337</span>
<span class="t" style="left:912.10px;top:583.05px;font-size:14px;font-weight:400;color:#2e2e2e;transform:scaleX(1.1007);">Residential Project</span>
<span class="t" style="left:1181.11px;top:583.35px;font-size:14px;font-weight:400;color:#151515;transform:scaleX(1.0887);">No Reporter</span>
<span class="t" style="left:1434.50px;top:583.05px;font-size:14px;font-weight:400;color:#151515;transform:scaleX(1.0981);">Josh ray</span>
<span class="t" style="left:1632.99px;top:583.65px;font-size:14px;font-weight:400;color:#151515;transform:scaleX(1.0082);">16/11/2025</span>
<span class="t" style="left:330.40px;top:639.25px;font-size:14px;font-weight:700;color:#0c0c0c;transform:scaleX(1.0992);">Drawin</span>
<span class="t" style="left:559.50px;top:641.15px;font-size:14px;font-weight:400;color:#141414;transform:scaleX(1.1271);">Skyline_Structures__855254</span>
<span class="t" style="left:912.10px;top:641.05px;font-size:14px;font-weight:400;color:#2e2e2e;transform:scaleX(1.1007);">Residential Project</span>
<span class="t" style="left:1181.11px;top:641.35px;font-size:14px;font-weight:400;color:#151515;transform:scaleX(1.0887);">No Reporter</span>
<span class="t" style="left:1433.36px;top:641.05px;font-size:14px;font-weight:400;color:#151515;transform:scaleX(1.1393);">Unassigned</span>
<span class="t" style="left:1632.99px;top:641.65px;font-size:14px;font-weight:400;color:#151515;transform:scaleX(1.0082);">16/11/2025</span>
<span class="t" style="left:330.40px;top:697.25px;font-size:14px;font-weight:700;color:#0c0c0c;transform:scaleX(1.0892);">Nancy</span>
<span class="t" style="left:558.35px;top:699.15px;font-size:14px;font-weight:400;color:#141414;transform:scaleX(1.1457);">Interior project</span>
<span class="t" style="left:912.10px;top:699.05px;font-size:14px;font-weight:400;color:#2e2e2e;transform:scaleX(1.1007);">Residential Project</span>
<span class="t" style="left:1182.20px;top:699.35px;font-size:14px;font-weight:400;color:#151515;transform:scaleX(1.0981);">Josh ray</span>
<span class="t" style="left:1434.50px;top:699.05px;font-size:14px;font-weight:400;color:#151515;transform:scaleX(1.0981);">Josh ray</span>
<span class="t" style="left:1634.00px;top:699.65px;font-size:14px;font-weight:400;color:#151515;transform:scaleX(1.1383);">22/09/2025</span>
<span class="t" style="left:330.40px;top:755.25px;font-size:14px;font-weight:700;color:#0c0c0c;transform:scaleX(1.0808);">Shreya</span>
<span class="t" style="left:559.50px;top:757.15px;font-size:14px;font-weight:400;color:#141414;transform:scaleX(1.1271);">Skyline_Structures__963454</span>
<span class="t" style="left:912.08px;top:757.05px;font-size:14px;font-weight:400;color:#2e2e2e;transform:scaleX(1.1159);">Interior Design</span>
<span class="t" style="left:1182.20px;top:757.35px;font-size:14px;font-weight:400;color:#151515;transform:scaleX(0.8466);">T R</span>
<span class="t" style="left:1434.50px;top:757.05px;font-size:14px;font-weight:400;color:#151515;transform:scaleX(1.0981);">Josh ray</span>
<span class="t" style="left:1634.00px;top:757.65px;font-size:14px;font-weight:400;color:#151515;transform:scaleX(1.0485);">07/11/2025</span>
<span class="t" style="left:330.40px;top:813.25px;font-size:14px;font-weight:700;color:#0c0c0c;transform:scaleX(1.0982);">Deepthi</span>
<span class="t" style="left:559.50px;top:815.15px;font-size:14px;font-weight:400;color:#141414;transform:scaleX(1.1059);">Skyline_Structures__414498</span>
<span class="t" style="left:913.20px;top:815.05px;font-size:14px;font-weight:400;color:#2e2e2e;transform:scaleX(1.1313);">Commercial Project</span>
<span class="t" style="left:1181.11px;top:815.35px;font-size:14px;font-weight:400;color:#151515;transform:scaleX(1.0887);">No Reporter</span>
<span class="t" style="left:1434.50px;top:815.05px;font-size:14px;font-weight:400;color:#151515;transform:scaleX(1.0981);">Josh ray</span>
<span class="t" style="left:1634.00px;top:815.65px;font-size:14px;font-weight:400;color:#151515;transform:scaleX(1.0485);">07/11/2025</span>
<span class="t" style="left:330.40px;top:871.25px;font-size:14px;font-weight:700;color:#0c0c0c;transform:scaleX(1.0691);">Neha Joshi</span>
<span class="t" style="left:559.50px;top:873.15px;font-size:14px;font-weight:400;color:#141414;transform:scaleX(1.1243);">Skyline_Structures__892609</span>
<span class="t" style="left:912.10px;top:873.05px;font-size:14px;font-weight:400;color:#2e2e2e;transform:scaleX(1.1007);">Residential Project</span>
<span class="t" style="left:1182.20px;top:873.35px;font-size:14px;font-weight:400;color:#151515;transform:scaleX(1.1031);">Joe Smith</span>
<span class="t" style="left:1433.36px;top:873.05px;font-size:14px;font-weight:400;color:#151515;transform:scaleX(1.1393);">Unassigned</span>
<span class="t" style="left:1634.00px;top:873.65px;font-size:14px;font-weight:400;color:#151515;transform:scaleX(1.1383);">22/09/2025</span>
<span class="t" style="left:330.40px;top:929.25px;font-size:14px;font-weight:700;color:#2c8ee0;transform:scaleX(1.0885);">Darshini</span>
<span class="t" style="left:558.35px;top:931.15px;font-size:14px;font-weight:400;color:#2c8ee0;transform:scaleX(1.1457);">Interior project</span>
<span class="t" style="left:912.08px;top:931.05px;font-size:14px;font-weight:400;color:#2e2e2e;transform:scaleX(1.1159);">Interior Design</span>
<span class="t" style="left:1181.11px;top:931.35px;font-size:14px;font-weight:400;color:#151515;transform:scaleX(1.0887);">No Reporter</span>
<span class="t" style="left:1433.36px;top:931.05px;font-size:14px;font-weight:400;color:#151515;transform:scaleX(1.1393);">Unassigned</span>
<span class="t" style="left:1634.00px;top:931.65px;font-size:14px;font-weight:400;color:#151515;transform:scaleX(1.1525);">29/09/2025</span>
<div class="abs" style="left:264px;top:450px;width:1500px;height:47px;border:2px solid #f50a0a"></div>
<div class="abs" style="left:1863px;top:912px;width:24px;height:31px;background:#3fa2f7"></div>
<svg class="abs" style="left:1815px;top:855px" width="82" height="82" viewBox="0 0 82 82">
<defs><filter id="sh" x="-30%" y="-30%" width="160%" height="160%"><feGaussianBlur stdDeviation="2.5"/></filter></defs>
<path d="M40,10.5 H64 a6,6 0 0 1 6,6 V40 A30,30 0 1 1 40,10.5 Z" fill="rgba(0,0,0,0.25)" filter="url(#sh)" transform="translate(-1,3)"/>
<path d="M40,8.8 H64 a6,6 0 0 1 6,6 V38.8 A30,30 0 1 1 40,8.8 Z" fill="#0a66c8"/>
<path d="M29,34.5 a3.5,3.5 0 0 1 3.5,-3.5 H48.2 a3.5,3.5 0 0 1 3.5,3.5 V44.3 a3.5,3.5 0 0 1 -3.5,3.5 H29 Z" fill="#fff"/>
<rect x="33.5" y="36" width="14.3" height="1.8" rx="0.9" fill="#0a66c8"/><rect x="33.5" y="40.9" width="9.3" height="1.8" rx="0.9" fill="#0a66c8"/>
</svg>
<svg class="abs" style="left:1872px;top:927px" width="6" height="16" viewBox="0 0 6 16" fill="#fff"><circle cx="3" cy="3.9" r="1.9"/><circle cx="3" cy="9.8" r="1.9"/><circle cx="3" cy="15.2" r="1.9"/></svg>
<svg class="abs" style="left:1191px;top:909px" width="16" height="22" viewBox="0 0 16 22"><path d="M1.5,1.2 L1.5,17.4 L4.6,14.4 L7.4,19.6 L9.8,18.5 L7.4,13.6 L12.6,13.3 Z" fill="#fff" stroke="#111" stroke-width="1.05" stroke-linejoin="round"/></svg>
</body></html>
